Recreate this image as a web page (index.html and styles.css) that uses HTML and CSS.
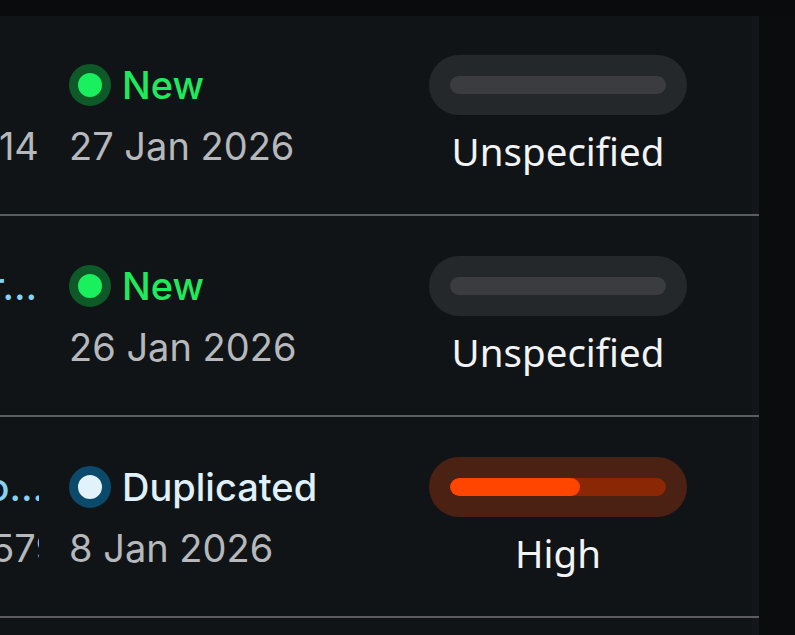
FILE: index.html
```html
<!DOCTYPE html>
<html lang="en">
<head>
<meta charset="utf-8">
<title>Issues</title>
<link rel="stylesheet" href="styles.css">
</head>
<body>
<div class="topbar"></div>
<div class="layout">
  <main class="panel">
    <div class="table">
      <div class="row">
        <div class="c-title">
          <div class="t-name t-short"><span>Bug</span></div>
          <div class="t-id"><span class="tail-cut-more">INC-0145</span></div>
        </div>
        <div class="c-status">
          <div class="status status-new"><span class="dot"></span><span class="s-label">New</span></div>
          <div class="date">27 Jan 2026</div>
        </div>
        <div class="c-prio">
          <div class="pill pill-none"><div class="track"><div class="fill" style="width:0%"></div></div></div>
          <div class="p-label">Unspecified</div>
        </div>
      </div>
      <div class="row">
        <div class="c-title">
          <div class="t-name"><span class="tail-fit">Export error after transfer…</span></div>
          <div class="t-id"></div>
        </div>
        <div class="c-status">
          <div class="status status-new"><span class="dot"></span><span class="s-label">New</span></div>
          <div class="date">26 Jan 2026</div>
        </div>
        <div class="c-prio">
          <div class="pill pill-none"><div class="track"><div class="fill" style="width:0%"></div></div></div>
          <div class="p-label">Unspecified</div>
        </div>
      </div>
      <div class="row">
        <div class="c-title">
          <div class="t-name"><span class="tail-over">Session timeout on uploading to…</span></div>
          <div class="t-id"><span class="tail-cut">INC-0579</span></div>
        </div>
        <div class="c-status">
          <div class="status status-dup"><span class="dot"></span><span class="s-label">Duplicated</span></div>
          <div class="date">8 Jan 2026</div>
        </div>
        <div class="c-prio">
          <div class="pill pill-high"><div class="track"><div class="fill" style="width:60%"></div></div></div>
          <div class="p-label">High</div>
        </div>
      </div>
      <div class="row"></div>
    </div>
  </main>
  <div class="gutter"></div>
</div>
</body>
</html>
```
FILE: styles.css
```css
* { box-sizing: border-box; }
html, body { margin: 0; padding: 0; }
body {
  background: #0b0c0e;
  width: 795px;
  height: 635px;
  overflow: hidden;
  font-family: "Inter", "Noto Sans", sans-serif;
}
.topbar { height: 16px; background: #0a0b0d; }
.layout { display: flex; height: 619px; }
.panel {
  width: 759px;
  flex: none;
  background: #111417;
  overflow: hidden;
  box-shadow: inset -7px 0 0 #13161a;
}
.gutter { flex: 1; background: #0b0c0e; }
.table { margin-top: -1px; margin-left: -161px; }
.row {
  display: grid;
  grid-template-columns: 200px 330px 258px;
  column-gap: 30px;
  height: 201px;
  padding-top: 49px;
  border-bottom: 2px solid #5b5d60;
}
.c-title { overflow: hidden; display: flex; flex-direction: column; gap: 18px; }
.t-name, .t-id {
  display: flex;
  justify-content: flex-end;
  overflow: hidden;
  white-space: nowrap;
}
.t-short { justify-content: flex-start; }
.t-name {
  height: 42px; line-height: 42px;
  font-size: 38px; font-weight: 500;
  color: #86d2f2;
}
.t-id { font-size: 38px; color: #b6b8bb; line-height: 44px; height: 44px; }
.t-name span, .t-id span { flex: none; }
.tail-fit { margin-right: 2px; }
.tail-over { margin-right: -5px; }
.tail-cut { margin-right: -20px; }
.tail-cut-more { margin-right: -23px; }
.c-status { display: flex; flex-direction: column; gap: 18px; }
.status { display: flex; align-items: center; gap: 11px; height: 42px; }
.dot {
  width: 42px; height: 42px; border-radius: 50%;
  border: 9px solid #0d5a28; background: #1aef5e;
  flex: none;
}
.s-label { font-size: 38px; font-weight: 500; line-height: 42px; }
.status-new .s-label { color: #1eea5d; }
.status-dup .dot { border-color: #0b4a6b; background: #e2f2fb; }
.status-dup .s-label { color: #dff0fa; }
.date { font-size: 38px; color: #b6b8bb; line-height: 44px; }
.c-prio { display: flex; flex-direction: column; align-items: center; gap: 14px; margin-top: -9px; }
.pill {
  width: 258px; height: 60px; border-radius: 30px;
  padding: 21px; background: #25282b;
}
.track { height: 18px; border-radius: 9px; background: #3a3c3f; overflow: hidden; }
.fill { height: 100%; border-radius: 9px; }
.pill-high { background: #4a2112; }
.pill-high .track { background: #8a2805; }
.pill-high .fill { background: #ff4500; }
.p-label { font-family: "Noto Sans", sans-serif; font-size: 38.5px; color: #f2f3f4; line-height: 44px; }
```
